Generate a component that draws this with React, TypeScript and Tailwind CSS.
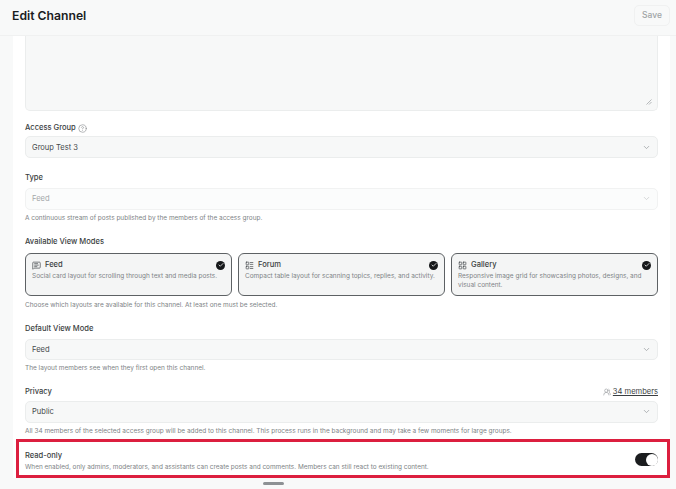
import { Check, ChevronDown, CircleHelp, LayoutGrid, LayoutList, MessageSquareText, UsersRound } from 'lucide-react'

const font = "font-['Inter','Liberation_Sans',sans-serif]"

function Select({ value, muted }: { value: string; muted?: boolean }) {
  return (
    <div
      className={`flex h-[21.6px] items-center justify-between rounded-[5px] border px-[6px] text-[7.56px] ${
        muted ? 'border-[#f1f2f2] bg-[#fbfcfc] text-[#a3a7a9]' : 'border-[#ebeded] bg-[#f7f8f8] text-[#45494c]'
      }`}
    >
      <span>{value}</span>
      <ChevronDown className={`h-[9px] w-[9px] ${muted ? 'text-[#c8cbcc]' : 'text-[#9a9ea0]'}`} />
    </div>
  )
}

function Hint({ children }: { children: React.ReactNode }) {
  return <p className="mt-[3px] text-[6.48px] leading-[11px] text-[#7e8386]">{children}</p>
}

function Label({ children }: { children: React.ReactNode }) {
  return <div className="text-[7.56px] font-medium leading-[12px] text-[#3a3e41]">{children}</div>
}

function ModeCard({ icon, title, text }: { icon: React.ReactNode; title: string; text: string }) {
  return (
    <div className="flex h-[43.5px] flex-col rounded-[6px] border border-[#5d6164] bg-[#f4f5f5] px-[6px] pt-[6.5px]">
      <div className="flex items-center justify-between">
        <div className="flex items-center gap-[4px] text-[7.56px] font-medium leading-[10px] text-[#3a3e41]">
          {icon}
          {title}
        </div>
        <span className="flex h-[9px] w-[9px] items-center justify-center rounded-full bg-[#16181a]">
          <Check className="h-[6px] w-[6px] text-white" strokeWidth={3} />
        </span>
      </div>
      <p className="mt-[2px] text-[6.48px] leading-[8.7px] text-[#7e8386]">{text}</p>
    </div>
  )
}

export default function App() {
  return (
    <div className={`${font} relative flex h-[489px] w-[676px] flex-col overflow-hidden bg-[#f8f9f9]`}>
      <header className="flex h-[36px] shrink-0 items-center justify-between border-b border-[#f0f1f1] pb-[4px] pl-[12px] pr-[6px]">
        <h1 className="pt-[1px] text-[12.2px] font-semibold text-[#1b1d1f]">Edit Channel</h1>
        <button className="h-[21px] w-[36px] rounded-[5px] border border-[#f0f1f1] text-[8.5px] font-medium text-[#a0a4a6]">Save</button>
      </header>
      <main className="ml-[13px] mr-[6px] h-[442px] shrink-0 bg-white px-[12px]">
        <div className="flex h-[74.5px] items-end justify-end rounded-b-[5px] border border-t-0 border-[#ebeded] bg-[#f7f8f8] p-[5px]">
          <svg viewBox="0 0 6 6" className="h-[6px] w-[6px] text-[#9a9ea0]" fill="none" stroke="currentColor" strokeWidth="0.7">
            <path d="M0.5 5.5 5.5 0.5M3 5.5 5.5 3" />
          </svg>
        </div>
        <div className="mt-[11.5px]">
          <div className="mb-[2.4px]">
            <Label>
              <span className="flex items-center gap-[2px]">
                Access Group <CircleHelp className="h-[9px] w-[9px] text-[#7e8386]" strokeWidth={1.5} />
              </span>
            </Label>
          </div>
          <Select value="Group Test 3" />
        </div>
        <div className="mt-[14.4px]">
          <div className="mb-[3.6px]">
            <Label>Type</Label>
          </div>
          <Select value="Feed" muted />
          <Hint>A continuous stream of posts published by the members of the access group.</Hint>
        </div>
        <div className="mt-[12.5px]">
          <Label>Available View Modes</Label>
          <div className="mt-[4.6px] grid grid-cols-3 gap-[6px]">
            <ModeCard icon={<MessageSquareText className="h-[9px] w-[9px]" strokeWidth={1.75} />} title="Feed" text="Social card layout for scrolling through text and media posts." />
            <ModeCard icon={<LayoutList className="h-[9px] w-[9px]" strokeWidth={1.75} />} title="Forum" text="Compact table layout for scanning topics, replies, and activity." />
            <ModeCard icon={<LayoutGrid className="h-[9px] w-[9px]" strokeWidth={1.75} />} title="Gallery" text="Responsive image grid for showcasing photos, designs, and visual content." />
          </div>
          <p className="mt-[3.5px] text-[6.48px] leading-[11px] text-[#7e8386]">
            Choose which layouts are available for this channel. At least one must be selected.
          </p>
        </div>
        <div className="mt-[12px]">
          <div className="mb-[4px]">
            <Label>Default View Mode</Label>
          </div>
          <Select value="Feed" />
          <Hint>The layout members see when they first open this channel.</Hint>
        </div>
        <div className="mt-[11.7px]">
          <div className="mb-[3.1px] flex items-center justify-between">
            <Label>Privacy</Label>
            <span className="flex items-center gap-[1.5px] text-[7.56px] leading-[12px] text-[#3a3e41]">
              <UsersRound className="h-[8px] w-[8px] text-[#7e8386]" strokeWidth={1.5} />
              <span className="underline">34 members</span>
            </span>
          </div>
          <Select value="Public" />
          <Hint>All 34 members of the selected access group will be added to this channel. This process runs in the background and may take a few moments for large groups.</Hint>
        </div>
        <div className="mt-[12.9px] flex items-center justify-between">
          <div>
            <Label>Read-only</Label>
            <p className="mt-[0.5px] text-[6.44px] leading-[11px] text-[#7e8386]">
              When enabled, only admins, moderators, and assistants can create posts and comments. Members can still react to existing content.
            </p>
          </div>
          <span className="-mt-[3px] flex h-[13px] w-[23px] items-center justify-end rounded-full bg-[#1b1d1f] pr-[0.5px]">
            <span className="h-[12px] w-[12px] rounded-full bg-white" />
          </span>
        </div>
      </main>
      <div className="flex flex-1 items-center justify-center pr-[130px]">
        <span className="h-[3.5px] w-[21px] rounded-full bg-[#8d9194]" />
      </div>
      <div className="pointer-events-none absolute left-[16px] top-[439px] h-[39px] w-[654px] border-[3.5px] border-[#dc1f3f]" />
    </div>
  )
}
